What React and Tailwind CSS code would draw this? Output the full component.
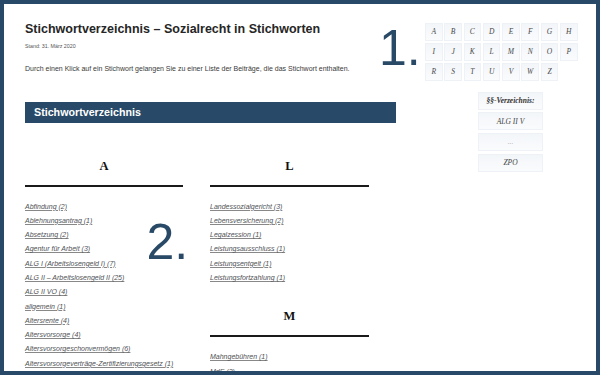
const letterRows = [
  ['A', 'B', 'C', 'D', 'E', 'F', 'G', 'H'],
  ['I', 'J', 'K', 'L', 'M', 'N', 'O', 'P'],
  ['R', 'S', 'T', 'U', 'V', 'W', 'Z'],
];

const columns = [
  [
    {
      letter: 'A',
      links: [
        'Abfindung (2)',
        'Ablehnungsantrag (1)',
        'Absetzung (2)',
        'Agentur für Arbeit (3)',
        'ALG I (Arbeitslosengeld I) (7)',
        'ALG II – Arbeitslosengeld II (25)',
        'ALG II VO (4)',
        'allgemein (1)',
        'Altersrente (4)',
        'Altersvorsorge (4)',
        'Altersvorsorgeschonvermögen (6)',
        'Altersvorsorgeverträge-Zertifizierungsgesetz (1)',
      ],
    },
  ],
  [
    {
      letter: 'L',
      links: [
        'Landessozialgericht (3)',
        'Lebensversicherung (2)',
        'Legalzession (1)',
        'Leistungsausschluss (1)',
        'Leistungsentgelt (1)',
        'Leistungsfortzahlung (1)',
      ],
    },
    {
      letter: 'M',
      links: ['Mahngebühren (1)', 'MdE (2)'],
    },
  ],
];

const paragraphs = [
  { label: '§§-Verzeichnis:', bold: true },
  { label: 'ALG II V' },
  { label: '...', muted: true },
  { label: 'ZPO' },
];

function Section({ letter, links }) {
  return (
    <div className="pt-[26px]">
      <h3 className="text-center font-['Liberation_Serif',serif] font-bold text-[12.5px] leading-[16px] text-[#111]">
        {letter}
      </h3>
      <div className="mt-[11px] h-[2px] bg-[#1a1a1a]" />
      <ul className="mt-[10px]">
        {links.map((l) => (
          <li key={l} className="h-[14.3px] leading-[14.3px]">
            <a className="italic underline decoration-[#888] text-[7px] text-[#4f5256]">{l}</a>
          </li>
        ))}
      </ul>
    </div>
  );
}

export default function App() {
  return (
    <div className="w-[600px] h-[375px] bg-[#284a68] p-[4px] font-['Liberation_Sans',Arial,sans-serif]">
      <div className="relative h-full bg-white overflow-hidden flex">
        {/* main column */}
        <div className="ml-[21px] w-[371px] pt-[18px] shrink-0">
          <h1 className="text-[12.5px] leading-[15px] font-bold text-[#262626]">
            Stichwortverzeichnis – Sozialrecht in Stichworten
          </h1>
          <p className="mt-[6px] text-[5.3px] leading-[7px] text-[#555]">Stand: 31. März 2020</p>
          <p className="mt-[14px] text-[7px] leading-[9px] text-[#3a3a3a]">
            Durch einen Klick auf ein Stichwort gelangen Sie zu einer Liste der Beiträge, die das Stichwort enthalten.
          </p>
          <div className="mt-[28.5px] h-[21px] bg-[#284a68] pl-[9px] flex items-center">
            <h2 className="text-white font-bold text-[10.7px] leading-none">Stichwortverzeichnis</h2>
          </div>
          <div className="mt-[9px] grid grid-cols-[158px_159px] gap-x-[27px]">
            {columns.map((col, i) => (
              <div key={i}>
                {col.map((s) => (
                  <Section key={s.letter} {...s} />
                ))}
              </div>
            ))}
          </div>
        </div>

        {/* sidebar */}
        <div className="ml-[29px] pt-[19px] w-[153px] shrink-0 font-['Liberation_Serif',serif]">
          <div className="flex flex-col gap-[2.5px]">
            {letterRows.map((row, i) => (
              <div key={i} className="flex gap-[1.8px]">
                {row.map((ch) => (
                  <div
                    key={ch}
                    className="w-[17.5px] h-[17.5px] flex items-center justify-center italic text-[7.5px] text-[#4a4a4a] bg-linear-to-b from-[#f3f6f9] to-[#fafbfd] border border-[#eef2f6]"
                  >
                    {ch}
                  </div>
                ))}
              </div>
            ))}
          </div>
          <div className="mt-[11px] ml-[53px] w-[65px] flex flex-col gap-[2.7px]">
            {paragraphs.map((p) => (
              <div
                key={p.label}
                className={`h-[18px] flex items-center justify-center italic text-[7.5px] bg-linear-to-b from-[#f3f6f9] to-[#fafbfd] border border-[#eef2f6] ${
                  p.bold ? 'font-bold text-[#333]' : p.muted ? 'text-[#aaa]' : 'text-[#444]'
                }`}
              >
                {p.label}
              </div>
            ))}
          </div>
        </div>

        {/* annotation numbers */}
        <div className="absolute left-[375px] top-[18.5px] text-[50px] leading-none text-[#294a66]">1.</div>
        <div className="absolute left-[142.5px] top-[212.5px] text-[50px] leading-none text-[#294a66]">2.</div>
      </div>
    </div>
  );
}
